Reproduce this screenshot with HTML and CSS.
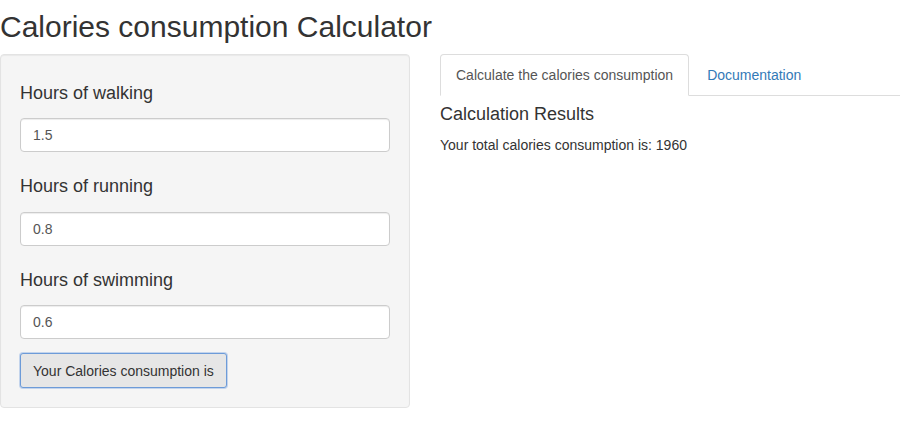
FILE: index.html
```html
<!DOCTYPE html>
<html>
<head>
<meta charset="utf-8">
<link rel="stylesheet" href="styles.css">
</head>
<body>
<h2 class="title">Calories consumption Calculator</h2>
<div class="row">
  <div class="well">
    <div class="form-group">
      <label class="label"><h4 class="label-text">Hours of walking</h4></label>
      <input class="input" type="text" value="1.5">
    </div>
    <div class="form-group">
      <label class="label"><h4 class="label-text">Hours of running</h4></label>
      <input class="input" type="text" value="0.8">
    </div>
    <div class="form-group">
      <label class="label"><h4 class="label-text">Hours of swimming</h4></label>
      <input class="input" type="text" value="0.6">
    </div>
    <button class="btn">Your Calories consumption is</button>
  </div>
  <div class="main">
    <ul class="tabs">
      <li class="tab active">Calculate the calories consumption</li>
      <li class="tab"><a class="tab-link">Documentation</a></li>
    </ul>
    <h4 class="result-title">Calculation Results</h4>
    <div class="result-text">Your total calories consumption is: 1960</div>
  </div>
</div>
</body>
</html>
```

FILE: styles.css
```css
html, body {
  margin: 0;
  padding: 0;
  background: #fff;
}
body {
  font-family: "Liberation Sans", Arial, Helvetica, sans-serif;
  font-size: 14px;
  line-height: 1.42857;
  color: #333;
}
.title {
  font-size: 30px;
  font-weight: 500;
  line-height: 33px;
  margin: 10px 0 11px 0;
  padding-left: 0;
}
.row {
  display: grid;
  grid-template-columns: 410px 1fr;
  column-gap: 30px;
  align-items: start;
}
.well {
  background: #f5f5f5;
  border: 1px solid #e3e3e3;
  border-radius: 4px;
  box-shadow: inset 0 1px 1px rgba(0,0,0,0.05);
  padding: 17px 19px 19px;
  display: flex;
  flex-direction: column;
}
.form-group {
  display: flex;
  flex-direction: column;
  margin-bottom: 15px;
}
.form-group:nth-child(3) {
  margin-bottom: 14px;
}
.label {
  display: block;
  margin-bottom: 5px;
}
.label-text {
  font-size: 18px;
  font-weight: 500;
  line-height: 1.1;
  margin: 10px 0;
}
.form-group:first-child .label-text {
  margin: 12px 0 9px;
}
.input {
  display: block;
  box-sizing: border-box;
  width: 100%;
  height: 34px;
  padding: 6px 12px;
  font-family: inherit;
  font-size: 14px;
  color: #555;
  background: #fff;
  border: 1px solid #ccc;
  border-radius: 4px;
  box-shadow: inset 0 1px 1px rgba(0,0,0,0.075);
  outline: none;
}
.btn {
  align-self: flex-start;
  box-sizing: border-box;
  height: 35px;
  padding: 6px 12px;
  font-family: inherit;
  font-size: 14px;
  line-height: 20px;
  color: #333;
  background: #e6e6e6;
  border: 1px solid #6d9bd8;
  border-radius: 3px;
  box-shadow: 0 0 0 1px rgba(102,153,220,0.35);
}
.main {
  display: flex;
  flex-direction: column;
}
.tabs {
  list-style: none;
  margin: 0;
  padding: 0;
  display: flex;
  border-bottom: 1px solid #ddd;
}
.tab {
  padding: 10px 15px;
  line-height: 20px;
  margin-bottom: -1px;
  margin-right: 2px;
  border: 1px solid transparent;
  border-radius: 4px 4px 0 0;
}
.tab.active {
  color: #555;
  background: #fff;
  border-color: #ddd #ddd transparent #ddd;
}
.tab-link {
  color: #337ab7;
  text-decoration: none;
}
.result-title {
  font-size: 18px;
  font-weight: 500;
  line-height: 1.1;
  margin: 9px 0 11px;
}
.result-text {
  margin: 0;
}
```
